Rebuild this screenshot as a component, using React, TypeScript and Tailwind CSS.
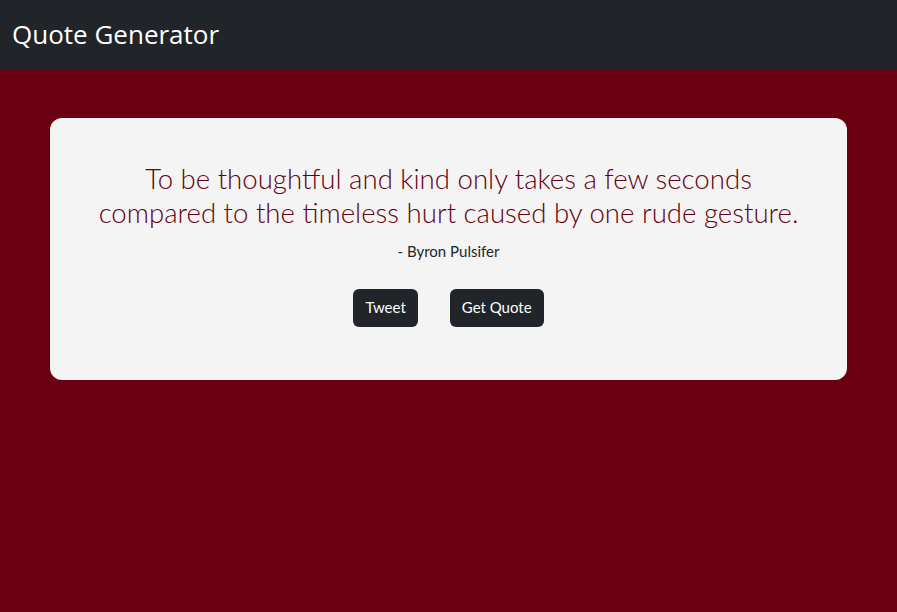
export default function App() {
  return (
    <div className="min-h-[612px] bg-[#6a0011]" style={{ fontFamily: '"Open Sans", "Noto Sans", sans-serif' }}>
      <header className="h-[70px] bg-[#212529] flex items-center px-3">
        <h1 className="text-[26px] text-white leading-none -mt-[2px]">Quote Generator</h1>
      </header>
      <main className="px-[50px] pt-[48px]">
        <div className="bg-[#f4f4f4] rounded-[12px] h-[262px] px-[20px] pt-[44px] flex flex-col items-center" style={{ fontFamily: 'Lato, "Noto Sans", sans-serif' }}>
          <p className="text-[27.6px] font-light leading-[34px] text-[#650010] text-center">
            To be thoughtful and kind only takes a few seconds
            <br />
            compared to the timeless hurt caused by one rude gesture.
          </p>
          <p className="mt-[10px] text-[15px] text-[#212529]">- Byron Pulsifer</p>
          <div className="mt-[26px] flex gap-[32px]">
            <button className="h-[38px] px-[12px] rounded-[6px] bg-[#212529] text-white text-[15px]">Tweet</button>
            <button className="h-[38px] px-[12px] rounded-[6px] bg-[#212529] text-white text-[15px]">Get Quote</button>
          </div>
        </div>
      </main>
    </div>
  );
}
